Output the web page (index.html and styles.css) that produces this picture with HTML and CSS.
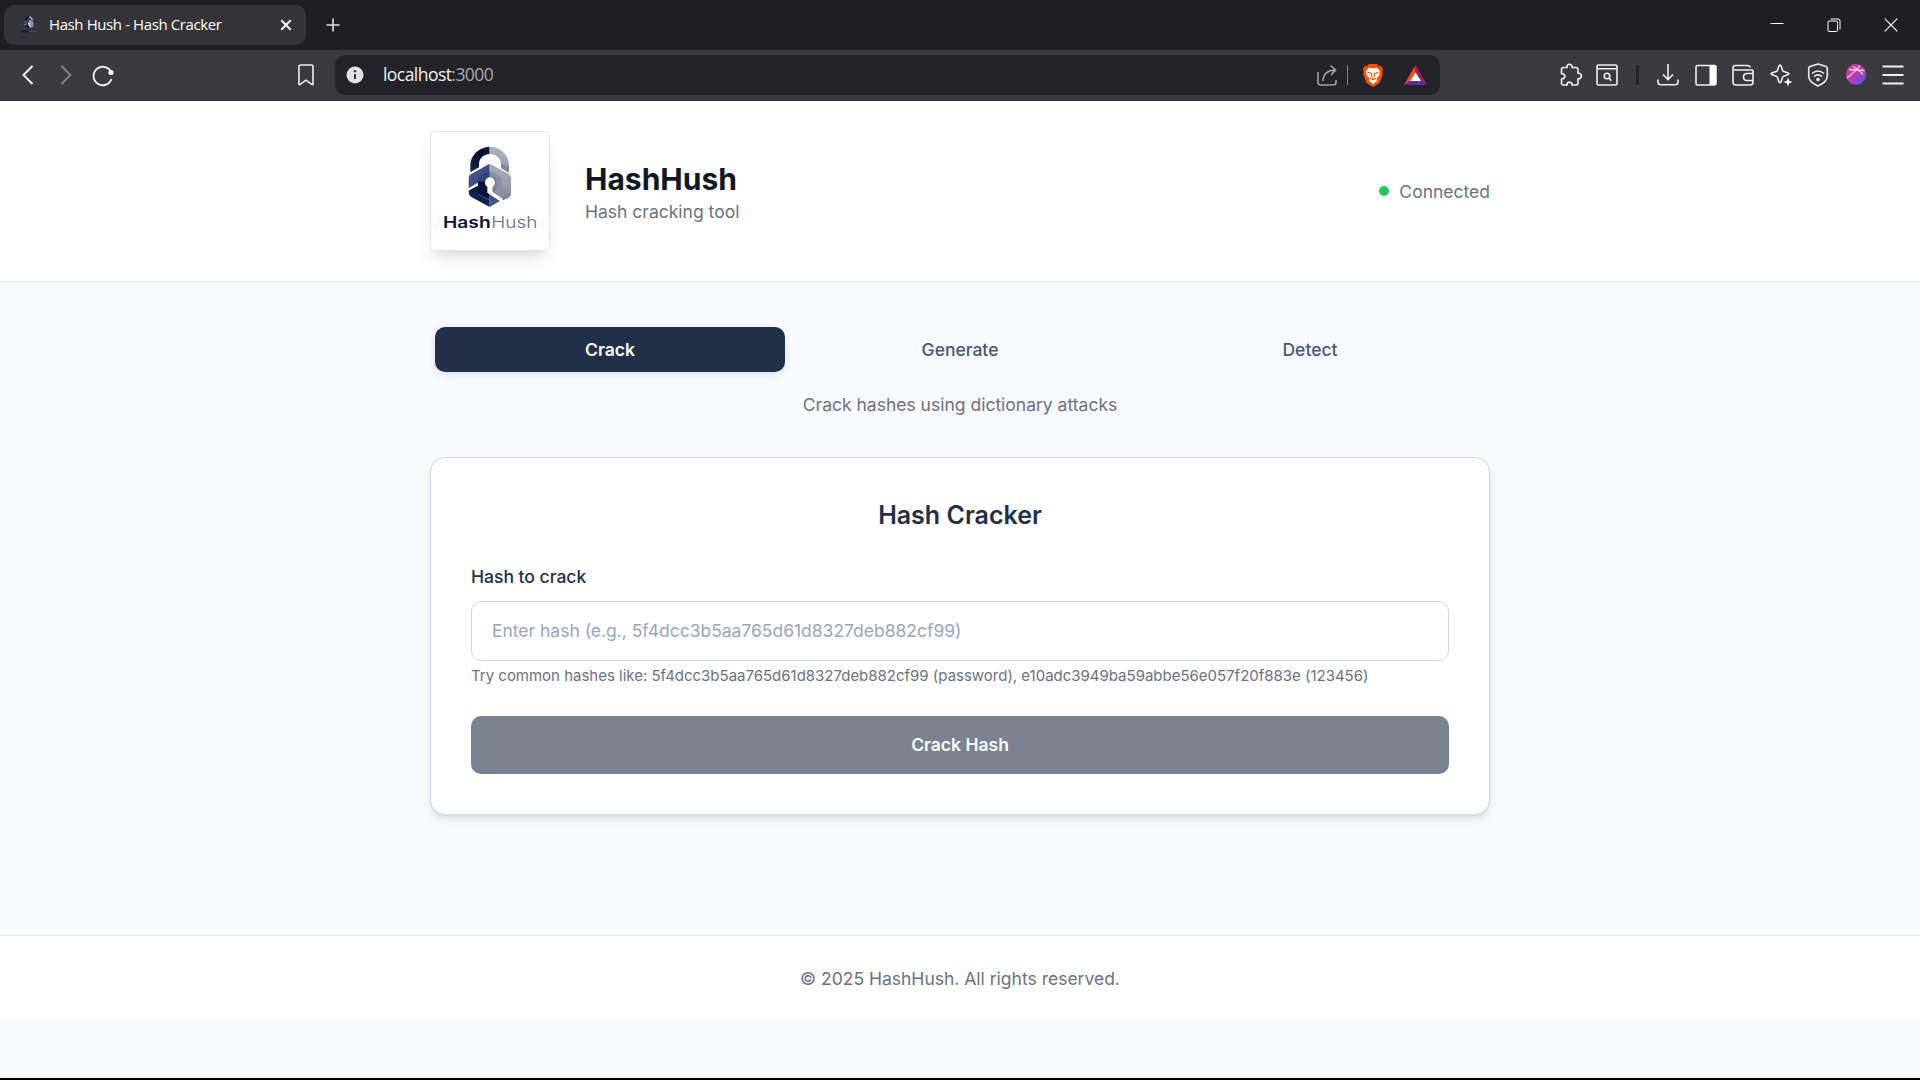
FILE: index.html
```html
<!DOCTYPE html>
<html lang="en">
<head>
<meta charset="utf-8">
<title>Hash Hush - Hash Cracker</title>
<link rel="stylesheet" href="styles.css">
</head>
<body>
<svg width="0" height="0" class="defs">
  <defs>
    <linearGradient id="shackleL" x1="0" y1="1" x2="1" y2="0"><stop offset="0" stop-color="#1c2950"/><stop offset=".6" stop-color="#060d30"/><stop offset="1" stop-color="#111b42"/></linearGradient>
    <linearGradient id="shackleR" x1="0" y1="0" x2="0" y2="1"><stop offset="0" stop-color="#b0b2ba"/><stop offset=".65" stop-color="#9fa3b0"/><stop offset="1" stop-color="#777e99"/></linearGradient>
    <linearGradient id="bodyL" x1="0" y1="0" x2="1" y2="1"><stop offset="0" stop-color="#4a5f99"/><stop offset="1" stop-color="#2f4173"/></linearGradient>
    <linearGradient id="bodyR" x1="0" y1="0" x2="0" y2="1"><stop offset="0" stop-color="#a6a9b5"/><stop offset=".6" stop-color="#9a9dae"/><stop offset="1" stop-color="#7b809d"/></linearGradient>
    <linearGradient id="orb" x1="0" y1="0" x2="1" y2="1"><stop offset="0" stop-color="#f2387e"/><stop offset=".5" stop-color="#b63bbd"/><stop offset="1" stop-color="#3c62e8"/></linearGradient>
    <symbol id="lock" viewBox="80 30 138 192">
      <path fill="url(#shackleL)" d="M149 35C117 36 91 61 91 91V112L117 97V88C117 70 131 58 149 57Z"/>
      <path fill="url(#shackleR)" d="M149 35C181 35 207 61 207 91V113L183 99V88C183 70 168 57 149 57Z"/>
      <path fill="#80869d" d="M183 86 207 96V113L183 99Z"/>
      <path fill="url(#bodyL)" d="M149 86 92 118Q86 122 86 129V160L114 144V149L149 170Z"/>
      <path fill="url(#bodyR)" d="M149 86 207 118Q213 122 213 130V176Q213 184 206 188L190 196 149 166Z"/>
      <path fill="#33447a" d="M149 107 114 127V150L149 170Z"/>
      <path fill="#8b90a5" d="M149 107 185 127V181L190 190 149 166Z"/>
      <path fill="#13204e" d="M86 165 114 152V177L149 196V216L93 185Q87 181 86 172Z"/>
      <path fill="#071139" d="M114 141 149 137V195L114 177Z"/>
      <path fill="#455486" d="M149 177 181 197 149 216Z"/>
      <path fill="#787e99" d="M149 119 170 130V165L149 175Z"/>
      <path fill="#fff" d="M149 127A16 16 0 0 1 158 156L157 171 188 191 180 198 142 173V156A16 16 0 0 1 149 127Z"/>
      <path fill="#fff" d="M84 161 113 143V151L84 168Z"/>
    </symbol>
  </defs>
</svg>

<div class="tabstrip">
  <div class="tab">
    <svg class="favicon" width="18" height="18" viewBox="0 0 18 18"><use href="#lock" x="4" y="0" width="10" height="13"/><path d="M1 15.5h8" stroke="#111b42" stroke-width="2"/><path d="M9 15.5h8" stroke="#484a5b" stroke-width="1"/></svg>
    <span class="tab-title">Hash Hush - Hash Cracker</span>
    <svg class="tab-close" width="12" height="12" viewBox="0 0 12 12" stroke="#fff" stroke-width="2"><path d="M1.3 1.3l9.4 9.4M10.7 1.3l-9.4 9.4"/></svg>
  </div>
  <svg class="new-tab" width="14" height="14" viewBox="0 0 14 14" stroke="#e3e3e6" stroke-width="1.6"><path d="M7 .5v13M.5 7h13"/></svg>
  <div class="window-buttons">
    <svg width="14" height="14" viewBox="0 0 14 14" stroke="#fff"><path d="M.5 5.5h13"/></svg>
    <svg width="14" height="14" viewBox="0 0 14 14" fill="none" stroke="#fff"><rect x="1" y="3" width="9.5" height="10.5" rx="1"/><path d="M3.5 1H11a2 2 0 0 1 2 2v8.5"/></svg>
    <svg width="14" height="14" viewBox="0 0 14 14" stroke="#fff" stroke-width="1.2"><path d="M.7.7l12.6 12.6M13.3.7.7 13.3"/></svg>
  </div>
</div>

<div class="toolbar">
  <div class="nav-icons">
    <svg class="icon" viewBox="0 0 24 24"><path stroke-width="2" d="M16.5 3 7.5 12l9 9"/></svg>
    <svg class="icon dim" viewBox="0 0 24 24"><path stroke-width="2" d="M7.5 3l9 9-9 9"/></svg>
    <svg class="icon" viewBox="0 0 24 24"><path stroke-width="1.9" d="M20.3 9.5A9.2 9.2 0 1 0 20.5 16"/><circle cx="20" cy="9.5" r="2.6" fill="#fff" stroke="none"/></svg>
  </div>
  <svg class="icon bookmark" viewBox="0 0 24 24"><path d="M6.5 2h11q1.500 0 1.500 1.500V21q0 1.300-1.200.4L12 17.200l-5.800 4.200Q5 22.300 5 21V3.500Q5 2 6.500 2Z"/></svg>
  <div class="address">
    <svg class="info" width="18" height="18" viewBox="0 0 18 18"><circle cx="9" cy="9" r="8.500" fill="#e2e1e7"/><path d="M9 8v5" fill="none" stroke="#37363c" stroke-width="2"/><circle cx="9" cy="5.300" r="1.200" fill="#37363c"/></svg>
    <span class="url">localhost<span class="port">:3000</span></span>
    <svg class="icon share" viewBox="0 0 24 24"><path d="M3 9v10q0 3 3 3h12q3 0 3-2.500V17M8 18c0-7 5-11 12-11M15.500 2.500 20.500 7l-4.500 5"/></svg>
    <span class="address-sep"></span>
    <svg class="brave" width="20" height="23" viewBox="0 0 20 23"><path fill="#ff5000" d="M6 0h8l2 2.200 2.300-.3L20 5l-.6 2 .3 3.500L16.500 19 10 23 3.500 19 .3 10.500.6 7 0 5l1.700-3.100L4 2.200Z"/><path fill="#fff" d="M10 4.500 14 3.700 17 7.200 16.200 11.500 13.500 14.500 14 17 10 20 6 17l.5-2.500-2.700-3L3 7.200 6 3.700Z"/><path fill="none" stroke="#ff5000" stroke-width="1.100" d="M4.500 8.200 8 9.200M15.500 8.200 12 9.200M8.600 9v4M11.400 9v4M7 14.200l3 1.500 3-1.500M10 13v2"/></svg>
    <svg class="bat" width="23" height="20" viewBox="0 0 23 20"><path fill="#ff4724" d="M11.500 0v7.500L6 16 0 20Z"/><path fill="#9e1f63" d="M11.500 0 23 20l-6-4-5.500-8.500Z"/><path fill="#662d91" d="M0 20 6 15.700h11L23 20Z"/><path fill="#fff" d="M11.500 7.500 17 16H6Z"/></svg>
  </div>
  <svg class="icon puzzle" viewBox="0 0 24 24"><path d="M4.500 4.500H8C7.500.2 13.500.2 13 4.500h4q2 0 2 2V10c4.500.5 4.500 5.500 0 6v4q0 2-2 2h-4c0-3.800-5-3.800-5 0H4.500q-2 0-2-2v-4c4.500-.5 4.500-5 0-5.500v-4q0-2 2-2Z"/></svg>
  <svg class="icon find" viewBox="0 0 24 24"><path d="M3.500 2h17q1.500 0 1.500 1.500v17q0 1.500-1.500 1.500h-17Q2 22 2 20.500v-17Q2 2 3.500 2ZM2 5.700h20"/><circle cx="12" cy="13" r="2.800"/><path d="m14 15 2.200 2.700"/></svg>
  <span class="bar-sep"></span>
  <div class="actions">
    <svg class="icon" viewBox="0 0 24 24"><path d="M12 1v15.500M7 11.500l5 5 5-5M2 16.500v2.500q0 2.800 2.800 2.800h14.400q2.800 0 2.800-2.800v-2.500"/></svg>
    <svg class="icon" viewBox="0 0 24 24"><rect x="2" y="2.500" width="20" height="19.500" rx="1.500"/><path fill="#fff" stroke="none" d="M15.500 2.500H22V22h-6.500Z"/></svg>
    <svg class="icon" viewBox="0 0 24 24"><path d="M22 7v12q0 3-3 3H5q-3 0-3-3V5q0-2.500 2.500-2.500h12q2.500 0 2.500 2M2 5q0 2 2.500 2H22M22 10.500h-6q-3.500 0-3.500 3.500t3.500 3.500h6"/></svg>
    <svg class="icon" viewBox="0 0 24 24"><path d="M11 2q.8 0 1.200 1.200l1.300 4q.3.900 1.200 1.200l4 1.400q1.200.4 1.200 1t-1.200 1l-4 1.400q-.9.300-1.200 1.200l-1.300 4q-.4 1.200-1.200 1.200t-1.200-1.200l-1.300-4q-.3-.9-1.200-1.200l-4-1.400q-1.200-.4-1.200-1t1.200-1l4-1.400q.9-.3 1.200-1.200l1.300-4Q10.200 2 11 2Z"/><path fill="#fff" stroke="none" d="m19 14.500 1.200 3.300 3.300 1.200-3.300 1.200L19 23.500l-1.200-3.300-3.300-1.200 3.300-1.200Z"/></svg>
    <svg class="icon" viewBox="0 0 24 24"><path d="M12 1 20 3.500q1.300.5 1.300 2V13q0 6-9.300 10-9.300-4-9.300-10V5.500q0-1.500 1.300-2ZM6 10.500q6-5 12 0M8 13.500q4-3.300 8 0"/><circle cx="12" cy="16.500" r="1.700" fill="#fff" stroke="none"/></svg>
    <svg class="icon" viewBox="0 0 24 24"><ellipse cx="12" cy="11.500" rx="10" ry="10.500" fill="url(#orb)" stroke="none"/><path stroke="#fbd7ef" stroke-width="1.300" d="M3 15C8 11 13 7 16 2.500M5 6.500 20.500 7.500M9 3.500q5 2.500 10 8"/></svg>
    <svg class="icon" viewBox="0 0 24 24"><path stroke-width="1.800" d="M1.500 3.500h21M1.500 12h21M1.500 20.500h21"/></svg>
  </div>
</div>

<div class="page">
  <header class="header">
    <div class="container header-row">
      <div class="logo">
        <svg width="118" height="118" viewBox="-27 -9 354 354">
          <use href="#lock" x="80" y="30" width="138" height="192"/>
          <text x="9" y="279" class="logo-bold" textLength="143" lengthAdjust="spacingAndGlyphs">Hash</text>
          <text x="154" y="279" class="logo-light" textLength="138" lengthAdjust="spacingAndGlyphs">Hush</text>
        </svg>
      </div>
      <div class="brand">
        <h1>HashHush</h1>
        <p>Hash cracking tool</p>
      </div>
      <div class="status"><span class="dot"></span>Connected</div>
    </div>
  </header>
  <main class="container main">
    <nav class="tabs">
      <button class="mode active">Crack</button>
      <button class="mode">Generate</button>
      <button class="mode">Detect</button>
    </nav>
    <p class="description">Crack hashes using dictionary attacks</p>
    <section class="card">
      <h2>Hash Cracker</h2>
      <label for="hash">Hash to crack</label>
      <input id="hash" type="text" placeholder="Enter hash (e.g., 5f4dcc3b5aa765d61d8327deb882cf99)">
      <p class="hint">Try common hashes like: 5f4dcc3b5aa765d61d8327deb882cf99 (password), e10adc3949ba59abbe56e057f20f883e (123456)</p>
      <button class="submit">Crack Hash</button>
    </section>
  </main>
  <footer class="footer">© 2025 HashHush. All rights reserved.</footer>
</div>
</body>
</html>
```
FILE: styles.css
```css
* { box-sizing: border-box; }
body {
  margin: 0;
  height: 1080px;
  overflow: hidden;
  display: flex;
  flex-direction: column;
  background: #000;
  font-family: Inter, "Liberation Sans", sans-serif;
  font-size: 17.5px;
  line-height: 25px;
  color: #6b7280;
}
h1, h2, p { margin: 0; }
button, input { font: inherit; border: 0; padding: 0; }
svg { display: block; flex: none; }
.defs { position: absolute; }

/* Browser frame */
.tabstrip {
  height: 50px;
  flex: none;
  display: flex;
  align-items: center;
  background: #1f1e24;
  padding: 0 22px 0 4px;
}
.tab {
  width: 302px;
  height: 40px;
  border-radius: 10px;
  background: #353439;
  display: flex;
  align-items: center;
  padding: 0 14px 0 16px;
}
.tab-title {
  margin-left: 11px;
  padding-bottom: 1px;
  flex: 1;
  color: #fff;
  font-family: "Open Sans", "Noto Sans", sans-serif;
  font-size: 15px;
  letter-spacing: -0.4px;
  white-space: nowrap;
}
.new-tab { margin-left: 20px; }
.window-buttons { margin-left: auto; display: flex; gap: 43px; }
.toolbar {
  height: 51px;
  flex: none;
  display: flex;
  align-items: center;
  background: #3b3a3f;
  border-bottom: 1px solid #2e2d33;
  padding-left: 16px;
}
.icon { width: 24px; height: 24px; fill: none; stroke: #f0f0f2; stroke-width: 1.6; }
.nav-icons { display: flex; gap: 13.5px; }
.dim { stroke: #828186; }
.bookmark { margin-left: 179px; }
.address {
  margin-left: 17px;
  width: 1105px;
  height: 40px;
  border-radius: 10px;
  background: #242329;
  display: flex;
  align-items: center;
  padding: 0 13px 0 11px;
}
.url {
  margin-left: 19px;
  padding-bottom: 2px;
  flex: 1;
  font-family: "Open Sans", "Noto Sans", sans-serif;
  font-size: 17.5px;
  letter-spacing: -0.55px;
  color: #f1f1f4;
}
.port { color: #a9a8ae; }
.share { stroke: #a2a1a7; }
.address-sep { width: 1px; height: 20px; margin: 0 15px 0 8px; background: #85848a; }
.brave { margin-right: 1px; }
.bat { margin-left: 20px; }
.puzzle { margin-left: 119px; }
.find { margin-left: 12px; }
.bar-sep { width: 3px; height: 20px; margin: 0 17px 0 17px; background: #242329; border-radius: 1px; }
.actions { display: flex; gap: 13.5px; }

/* Application */
.page { height: 977px; flex: none; background: #f9fafc; }
.container { width: 1060px; margin: 0 auto; }
.header { background: #fff; border-bottom: 1px solid #e2e5eb; padding: 30px 0; }
.header-row { display: flex; align-items: center; }
.logo {
  width: 120px;
  height: 120px;
  border: 1px solid #e5e7eb;
  border-radius: 5px;
  background: #fff;
  box-shadow: 0 12px 19px -4px rgba(0, 0, 0, .1), 0 5px 8px -5px rgba(0, 0, 0, .1);
}
.logo-bold { font: 600 46px Inter, sans-serif; fill: #0b1236; }
.logo-light { font: 300 46px Inter, sans-serif; fill: #646985; }
.brand { margin-left: 35px; }
h1 { font-size: 30px; line-height: 40px; font-weight: 700; color: #101828; }
.status { margin-left: auto; display: flex; align-items: center; }
.dot { width: 10px; height: 10px; border-radius: 50%; background: #22c55e; margin-right: 10px; }
.main { padding-top: 40px; height: 653px; }
.tabs { display: flex; padding: 5px; background: #f7faff; border-radius: 10px; }
.mode {
  flex: 1;
  height: 45px;
  border-radius: 10px;
  background: none;
  color: #475778;
  font-weight: 500;
}
.mode.active {
  background: #222f49;
  color: #fff;
  font-weight: 600;
  box-shadow: 0 4px 8px -1px rgba(70, 90, 190, .12), 0 0 8px rgba(70, 90, 190, .05);
}
.description { margin-top: 15px; text-align: center; }
.card {
  margin-top: 40px;
  height: 358px;
  padding: 40px;
  background: #fff;
  border: 1px solid #d1d8e6;
  border-radius: 15px;
  box-shadow: 0 5px 8px -1px rgba(0, 0, 0, .1), 0 2px 5px -2px rgba(0, 0, 0, .1);
  display: flex;
  flex-direction: column;
}
h2 { text-align: center; font-size: 25px; line-height: 35px; font-weight: 600; color: #222f49; }
label { margin-top: 31px; font-weight: 500; color: #222f49; }
.card input {
  margin-top: 12px;
  height: 60px;
  flex: none;
  padding: 0 20px 2px;
  border: 1px solid #d1d8e6;
  border-radius: 10px;
  background: #fff;
  letter-spacing: -0.015px;
}
.card input::placeholder { color: #99a6bd; opacity: 1; }
.hint { margin-top: 5px; font-size: 15px; line-height: 20px; letter-spacing: -0.011px; white-space: nowrap; }
.submit {
  margin-top: 30px;
  height: 58px;
  flex: none;
  padding-bottom: 2px;
  border-radius: 10px;
  background: #7b8391;
  color: #fbfbfc;
  font-weight: 600;
}
.footer {
  height: 86px;
  padding-top: 30px;
  border-top: 1px solid #e2e5eb;
  background: #fff;
  text-align: center;
}
```
